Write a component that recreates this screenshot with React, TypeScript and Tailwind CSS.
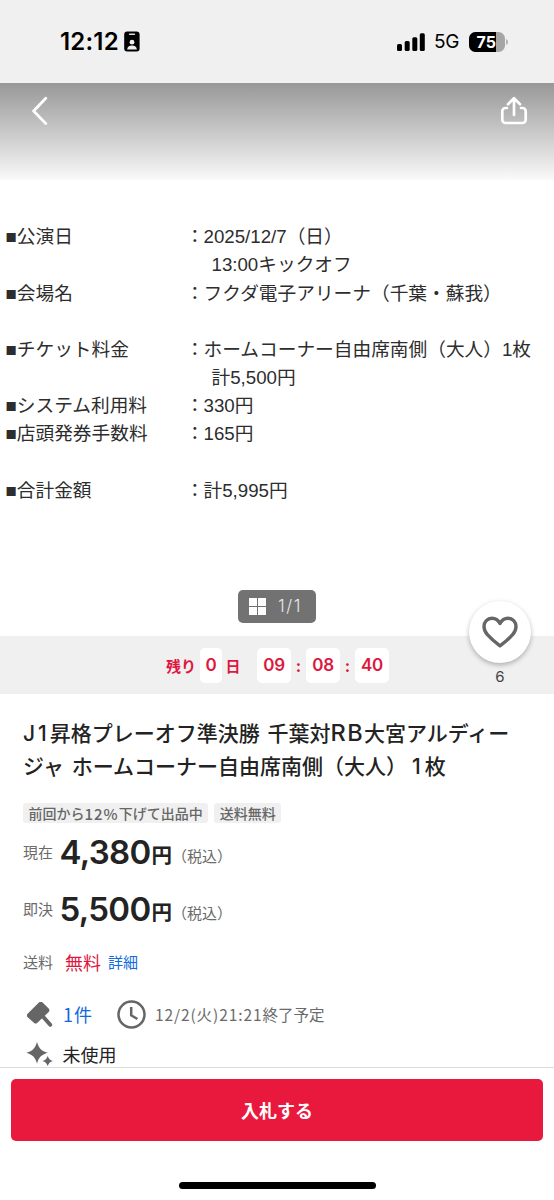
import * as React from "react";

const ticketRows = [
  { label: "公演日", lines: ["2025/12/7（日）", "13:00キックオフ"] },
  { label: "会場名", lines: ["フクダ電子アリーナ（千葉・蘇我）", ""] },
  { label: "チケット料金", lines: ["ホームコーナー自由席南側（大人）1枚", "計5,500円"] },
  { label: "システム利用料", lines: ["330円"] },
  { label: "店頭発券手数料", lines: ["165円", ""] },
  { label: "合計金額", lines: ["計5,995円"] },
];

const prices = [
  { label: "現在", value: "4,380" },
  { label: "即決", value: "5,500" },
];

const StatusBar = () => (
  <header className="flex h-[83px] shrink-0 items-center justify-between bg-[#f0f0f0] pl-[60px] pr-[46px] text-black">
    <div className="flex items-center gap-[5px]">
      <span className="w-[59px] whitespace-nowrap font-['Inter',sans-serif] text-[24px] font-semibold leading-none tracking-[0.2px]">
        12:12
      </span>
      <svg width="16" height="21" viewBox="0 0 16 21">
        <rect x="0.2" y="0.5" width="15.4" height="20" rx="3" fill="#000" />
        <rect x="4.8" y="2.5" width="6.4" height="1.6" rx="0.8" fill="#ddd" />
        <circle cx="8" cy="11.2" r="2.4" fill="#f0f0f0" />
        <path d="M3.2 18.4c0-2.6 2-4 4.8-4s4.8 1.4 4.8 4z" fill="#f0f0f0" />
      </svg>
    </div>
    <div className="flex items-center">
      <svg width="28" height="18" viewBox="0 0 28 18" fill="#000">
        <rect x="0" y="11" width="5" height="7" rx="1.5" />
        <rect x="7.7" y="8" width="5" height="10" rx="1.5" />
        <rect x="15.3" y="4.2" width="5" height="13.8" rx="1.5" />
        <rect x="22.8" y="0.3" width="5" height="17.7" rx="1.5" />
      </svg>
      <span className="ml-[9px] w-[26px] font-['Inter',sans-serif] text-[19px] leading-none tracking-[-0.2px]">
        5G
      </span>
      <svg className="ml-[9px]" width="39" height="20" viewBox="0 0 39 20">
        <defs>
          <clipPath id="battery">
            <rect x="0" y="0" width="36" height="20" rx="6.5" />
          </clipPath>
        </defs>
        <g clipPath="url(#battery)">
          <rect width="36" height="20" fill="#a5a5a5" />
          <rect width="27" height="20" fill="#000" />
        </g>
        <path d="M37.2 7v6c1-.5 1.7-1.6 1.7-3s-.7-2.5-1.7-3z" fill="#a5a5a5" />
        <text
          x="17.3"
          y="15.7"
          textAnchor="middle"
          className="fill-white font-['Inter',sans-serif] text-[16px] font-bold"
        >
          75
        </text>
      </svg>
    </div>
  </header>
);

const TicketInfo = () => (
  <div className="mt-[43.3px] pl-[5.5px] font-['Liberation_Sans','Noto_Sans_CJK_JP',sans-serif] text-[18.7px] leading-[28.15px] text-[#2d2d2d]">
    {ticketRows.map((row) => (
      <div key={row.label} className="flex whitespace-nowrap">
        <div className="w-[180px]">■{row.label}</div>
        <div className="w-[18px]">：</div>
        <div>
          {row.lines.map((line, i) => (
            <div key={i} className={i === 0 ? "h-[28.15px]" : "h-[28.15px] pl-2"}>
              {line}
            </div>
          ))}
        </div>
      </div>
    ))}
  </div>
);

const TimeBox = ({ children, narrow }: { children: React.ReactNode; narrow?: boolean }) => (
  <span
    className={`flex h-[35px] items-center justify-center rounded-[5px] bg-white font-['Inter',sans-serif] text-[17px] font-semibold tracking-[-0.2px] ${
      narrow ? "w-[22px]" : "w-[34px]"
    }`}
  >
    {children}
  </span>
);

const Tag = ({ children }: { children: React.ReactNode }) => (
  <span className="flex h-[20px] items-center whitespace-nowrap rounded-[3px] bg-[#f0f0f0] px-[5.5px] text-[14px] font-medium leading-none text-[#666]">
    {children}
  </span>
);

const App = () => {
  return (
    <div className="flex h-[1200px] w-[554px] flex-col overflow-hidden bg-white font-['Noto_Sans_CJK_JP',sans-serif] text-[#232323]">
      <StatusBar />

      <section className="relative h-[553px] shrink-0">
        <div className="flex h-[97px] items-start justify-between bg-linear-to-b from-[#989898] to-[#fafafa] pl-8 pr-[26px] pt-[13px]">
          <svg width="16" height="30" viewBox="0 0 16 30" fill="none" stroke="#fff" strokeWidth="2.8">
            <path d="M13.8 2.2 1.6 15l12.2 12.6" strokeLinecap="round" strokeLinejoin="round" />
          </svg>
          <svg
            width="28"
            height="29"
            viewBox="0 0 28 29"
            fill="none"
            stroke="#fff"
            strokeWidth="2.7"
            strokeLinecap="round"
            strokeLinejoin="round"
          >
            <path d="M14 19V3M8 8.2 14 2.3l6 5.9" />
            <path d="M7 12H5.5A3.2 3.2 0 0 0 2.3 15.2v8.6A3.2 3.2 0 0 0 5.5 27h17a3.2 3.2 0 0 0 3.2-3.2v-8.6A3.2 3.2 0 0 0 22.5 12H21" />
          </svg>
        </div>
        <TicketInfo />
        <div className="absolute left-[238px] top-[507px] flex h-[33px] w-[78px] items-center rounded-[5px] bg-[#727272] pl-[11px] text-[#e8e8e8]">
          <svg width="17" height="17" viewBox="0 0 17 17" fill="#fff">
            <path d="M0 0h8v8H0zM9 0h8v8H9zM0 9h8v8H0zM9 9h8v8H9z" />
          </svg>
          <span className="ml-[12px] font-['Inter',sans-serif] text-[17px] font-light leading-none tracking-[1.6px]">
            1/1
          </span>
        </div>
        <div className="absolute left-[469px] top-[518px] flex w-[62px] flex-col items-center">
          <button className="flex h-[62px] w-[62px] items-center justify-center rounded-full bg-white shadow-[0_2px_5px_rgba(0,0,0,0.28)]">
            <svg width="36" height="32" viewBox="0 0 36 32" fill="none">
              <path
                d="M18 29.8C15.5 28 9 22.8 5.4 18.7 2.8 15.7 2 13.3 2 10.5 2 5.7 5.5 2.3 9.9 2.3c3.6 0 6.5 2.2 8.1 5.2 1.6-3 4.5-5.2 8.1-5.2 4.4 0 7.9 3.4 7.9 8.2 0 2.8-.8 5.2-3.4 8.2C27 22.8 20.5 28 18 29.8z"
                stroke="#666"
                strokeWidth="3.4"
                strokeLinejoin="round"
              />
            </svg>
          </button>
          <span className="mt-[6px] font-['Inter',sans-serif] text-[15px] leading-4 text-[#444]">6</span>
        </div>
      </section>

      <div className="flex h-[58px] shrink-0 items-center bg-[#f0f0f0] pl-[166px] text-[15px] font-bold leading-none text-[#de1740]">
        <span className="w-[34px] whitespace-nowrap">残り</span>
        <TimeBox narrow>0</TimeBox>
        <span className="w-[35px] pl-[3.5px]">日</span>
        <TimeBox>09</TimeBox>
        <span className="w-[15px] text-center">:</span>
        <TimeBox>08</TimeBox>
        <span className="w-[15px] text-center">:</span>
        <TimeBox>40</TimeBox>
      </div>

      <main className="min-h-0 flex-1 overflow-hidden pl-[23px] pt-[22px]">
        <h1 className="h-[66px] whitespace-nowrap text-[21px] font-medium leading-[32.5px] [word-spacing:3px]">
          <span className="font-['Inter',sans-serif] leading-none tracking-[3px]">J1</span>
          昇格プレーオフ準決勝 千葉対
          <span className="font-['Inter',sans-serif] text-[23.5px] leading-none tracking-[1.4px]">RB</span>
          大宮アルディー
          <br />
          ジャ ホームコーナー自由席南側（大人）
          <span className="pl-[5px] pr-[4px] font-['Inter',sans-serif] leading-none">1</span>枚
        </h1>

        <div className="mt-[21px] flex gap-[6px]">
          <Tag>
            前回から<span className="text-[15px] tracking-[1px]">12%</span>下げて出品中
          </Tag>
          <Tag>送料無料</Tag>
        </div>

        {prices.map((price) => (
          <div key={price.label} className="flex h-[57px] items-center whitespace-nowrap">
            <span className="w-[36.5px] pt-px text-[15px] text-[#6a6a6a]">{price.label}</span>
            <span className="w-[92px] pt-[2px] font-['Inter',sans-serif] text-[33px] font-semibold leading-none tracking-[-0.7px]">
              {price.value}
            </span>
            <span className="pt-[5px] text-[20.5px] font-bold leading-none">円</span>
            <span className="pt-[8px] text-[15px] leading-none text-[#6a6a6a]">（税込）</span>
          </div>
        ))}

        <div className="flex h-[50px] items-center whitespace-nowrap">
          <span className="w-[42px] text-[15px] text-[#6a6a6a]">送料</span>
          <span className="w-[43px] text-[18px] text-[#de1740]">無料</span>
          <span className="text-[15px] text-[#1268e0]">詳細</span>
        </div>

        <div className="flex h-[55px] items-center whitespace-nowrap">
          <svg
            className="ml-[3px]"
            width="27"
            height="27"
            viewBox="0 0 27 27"
            fill="#666"
            stroke="#666"
            strokeWidth="2.4"
            strokeLinejoin="round"
            strokeLinecap="round"
          >
            <path d="M2.2 13.8 14 2.2h1.5l6.6 6.4v1.3L10.3 21.2H9L2.2 15z" />
            <path d="M16 14.5l8.2 9.3" strokeWidth="4" />
          </svg>
          <span className="ml-[10px] w-[54px] text-[18px] text-[#1268e0]">
            <span className="pr-[1px]">1</span>件
          </span>
          <svg width="29" height="29" viewBox="0 0 29 29" fill="none" stroke="#666" strokeWidth="2.5">
            <circle cx="14.5" cy="14.5" r="13" />
            <path d="M14.2 7v8.2l6.2 3.8" />
          </svg>
          <span className="ml-[9px] pt-px text-[15.5px] text-[#6a6a6a]">
            <span className="tracking-[0.9px]">12/2(火)21:21</span>終了予定
          </span>
        </div>

        <div className="flex h-[24px] items-center whitespace-nowrap">
          <svg className="ml-[3px]" width="27" height="24" viewBox="0 0 27 24" fill="#666">
            <path d="M11 0c1.7 6 4.2 8.900 10.700 10.800C15.200 12.700 12.700 15.600 11 21.600 9.300 15.600 6.800 12.700.3 10.800 6.800 8.900 9.300 6 11 0z" />
            <path d="M21.700 14c1 2.800 2.200 4 5.200 5-3 1-4.200 2.200-5.200 5-1-2.800-2.200-4-5.200-5 3-1 4.200-2.200 5.200-5z" />
          </svg>
          <span className="ml-[9.5px] text-[18px] leading-[22px]">未使用</span>
        </div>
      </main>

      <footer className="flex h-[133px] shrink-0 flex-col items-center border-t border-[#dcdcdc] bg-white pt-[11px]">
        <button className="h-[62px] w-[532px] rounded-[5px] bg-[#e9183d] text-[18px] font-bold text-white">
          入札する
        </button>
        <div className="mt-[41px] h-[7px] w-[197px] rounded-full bg-black" />
      </footer>
    </div>
  );
};

export default App;
